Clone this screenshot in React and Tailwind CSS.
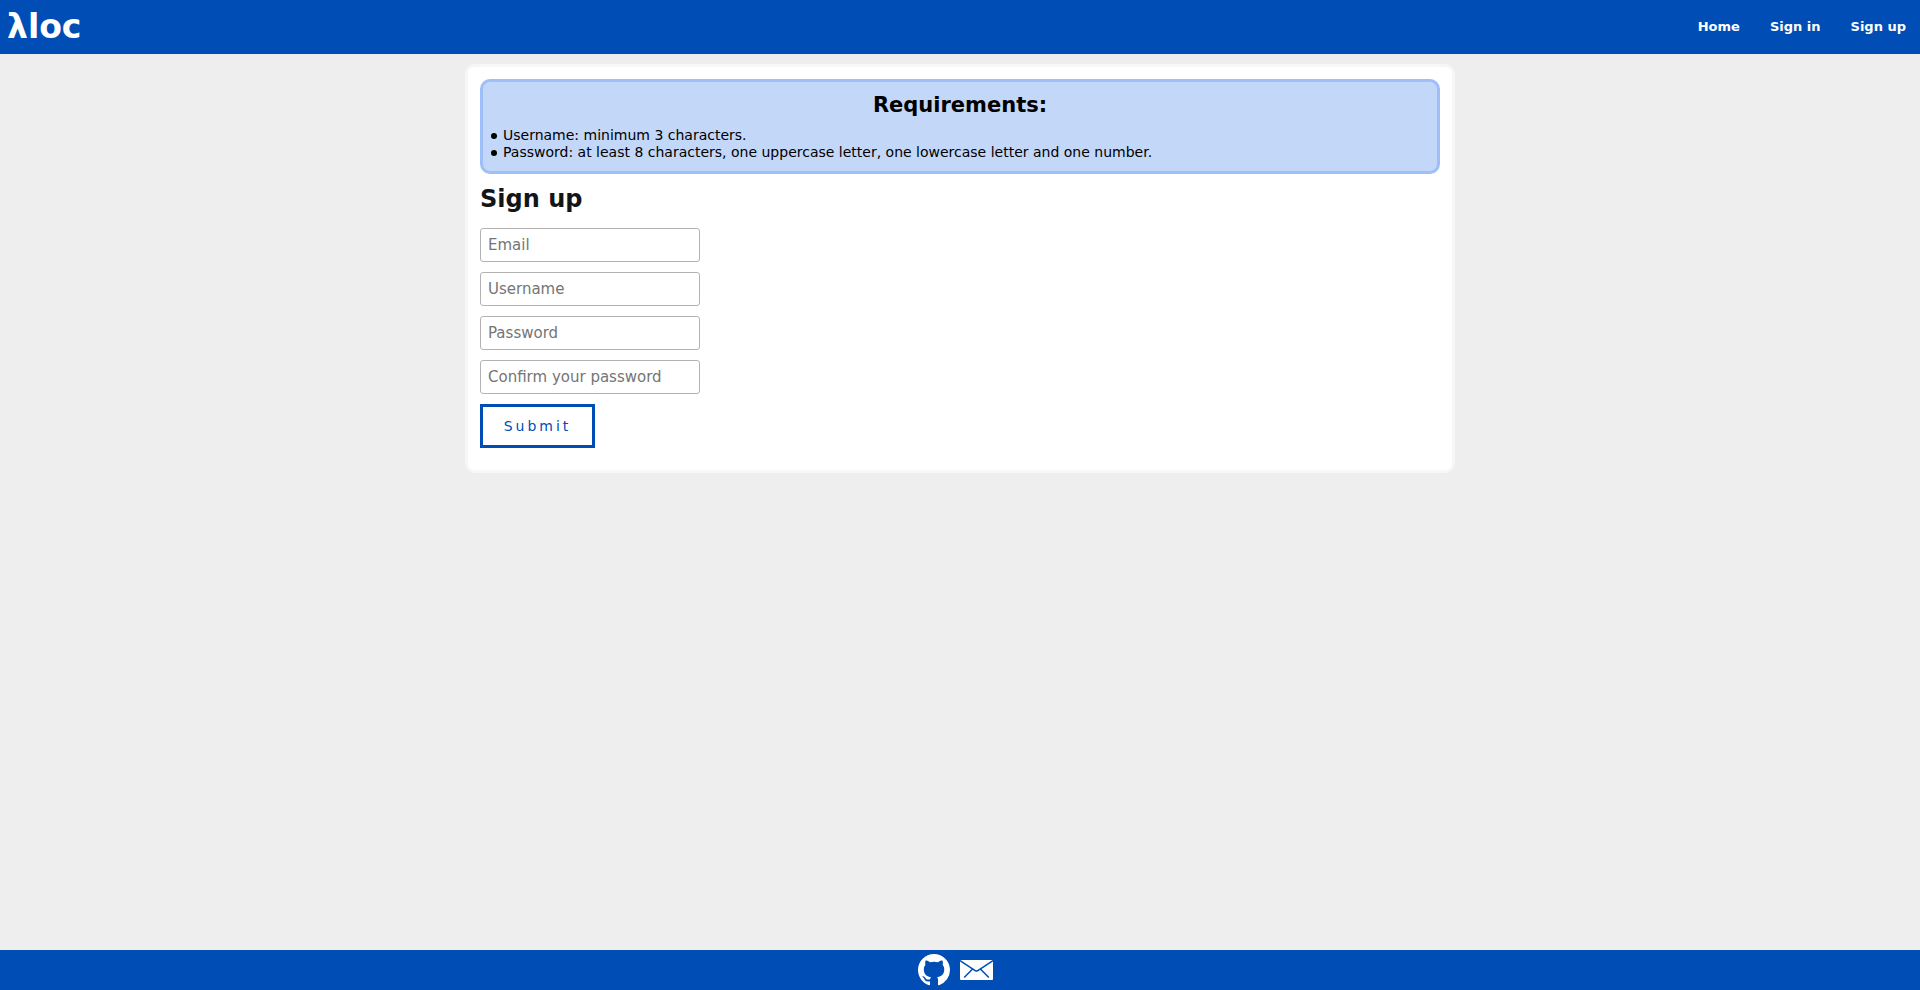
const navLinks = ["Home", "Sign in", "Sign up"];

const requirements = [
  "Username: minimum 3 characters.",
  "Password: at least 8 characters, one uppercase letter, one lowercase letter and one number.",
];

const fields = [
  { id: "email", label: "Email", type: "email" },
  { id: "username", label: "Username", type: "text" },
  { id: "password", label: "Password", type: "password" },
  { id: "confirm", label: "Confirm your password", type: "password" },
];

function GithubIcon() {
  return (
    <svg viewBox="0 0 16 16" className="size-8 fill-current" aria-hidden="true">
      <path d="M8 0C3.58 0 0 3.58 0 8c0 3.54 2.29 6.53 5.47 7.59.4.07.55-.17.55-.38 0-.19-.01-.82-.01-1.49-2.01.37-2.53-.49-2.69-.94-.09-.23-.48-.94-.82-1.13-.28-.15-.68-.52-.01-.53.63-.01 1.08.58 1.23.82.72 1.21 1.87.87 2.33.66.07-.52.28-.87.51-1.07-1.78-.2-3.64-.89-3.64-3.95 0-.87.31-1.59.82-2.15-.08-.2-.36-1.02.08-2.12 0 0 .67-.21 2.2.82.64-.18 1.32-.27 2-.27.68 0 1.36.09 2 .27 1.53-1.04 2.2-.82 2.2-.82.44 1.1.16 1.92.08 2.12.51.56.82 1.27.82 2.15 0 3.07-1.87 3.75-3.65 3.95.29.25.54.73.54 1.48 0 1.07-.01 1.93-.01 2.2 0 .21.15.46.55.38A8.01 8.01 0 0 0 16 8c0-4.42-3.58-8-8-8z" />
    </svg>
  );
}

function MailIcon() {
  return (
    <svg viewBox="0 0 33 20" className="h-5 w-[33px]" aria-hidden="true">
      <rect width="33" height="20" rx="1" fill="#fff" />
      <g fill="none" stroke="#004db6" strokeWidth="1.5">
        <path d="M0 .6 14.4 10.2Q16.5 11.6 18.6 10.2L33 .6" />
        <path d="M4.2 17.6 12.6 9M28.8 17.6 20.4 9" />
      </g>
    </svg>
  );
}

export default function App() {
  return (
    <div className="flex min-h-screen flex-col bg-[#eeeeee] font-['DejaVu_Sans',sans-serif] text-sm text-[#121619]">
      <header className="flex h-[54px] items-center justify-between bg-[#004db6] px-[7px] text-white">
        <a href="#" className="text-[33px] leading-10 font-bold">λloc</a>
        <nav className="flex gap-[30px] pr-[7px] text-[13px] font-bold">
          {navLinks.map((label) => (
            <a key={label} href="#">{label}</a>
          ))}
        </nav>
      </header>

      <main className="flex-1 px-4 py-2.5">
        <div className="mx-auto max-w-[990px] rounded-[10px] border-3 border-[#f7f7f7] bg-white p-3">
          <section className="rounded-[10px] border-3 border-[#9fbff9] bg-[#c3d7f9] px-2 pt-[9px] pb-2.5 text-black">
            <h2 className="mb-2 text-center text-[21px] leading-7 font-bold">Requirements:</h2>
            <ul className="leading-[17px]">
              {requirements.map((text) => (
                <li
                  key={text}
                  className="flex items-center gap-1.5 before:size-1.5 before:shrink-0 before:rounded-full before:bg-black"
                >
                  {text}
                </li>
              ))}
            </ul>
          </section>

          <h1 className="mt-2.5 mb-3.5 text-2xl leading-[30px] font-bold">Sign up</h1>

          <form className="flex flex-col items-start gap-2.5 pb-2.5" onSubmit={(e) => e.preventDefault()}>
            {fields.map(({ id, label, type }) => (
              <input
                key={id}
                id={id}
                type={type}
                aria-label={label}
                placeholder={label}
                className="h-[34px] w-[220px] rounded-[3px] border border-[#b3b3b3] bg-white px-[7px] text-[15px] placeholder:text-[#757575]"
              />
            ))}
            <button
              type="submit"
              className="h-11 w-[115px] border-3 border-[#004db6] bg-white tracking-[3px] text-[#004db6]"
            >
              Submit
            </button>
          </form>
        </div>
      </main>

      <footer className="flex h-10 items-center justify-center gap-2.5 bg-[#004db6] pr-2.5 text-white">
        <a href="#" aria-label="GitHub"><GithubIcon /></a>
        <a href="#" aria-label="Email"><MailIcon /></a>
      </footer>
    </div>
  );
}
